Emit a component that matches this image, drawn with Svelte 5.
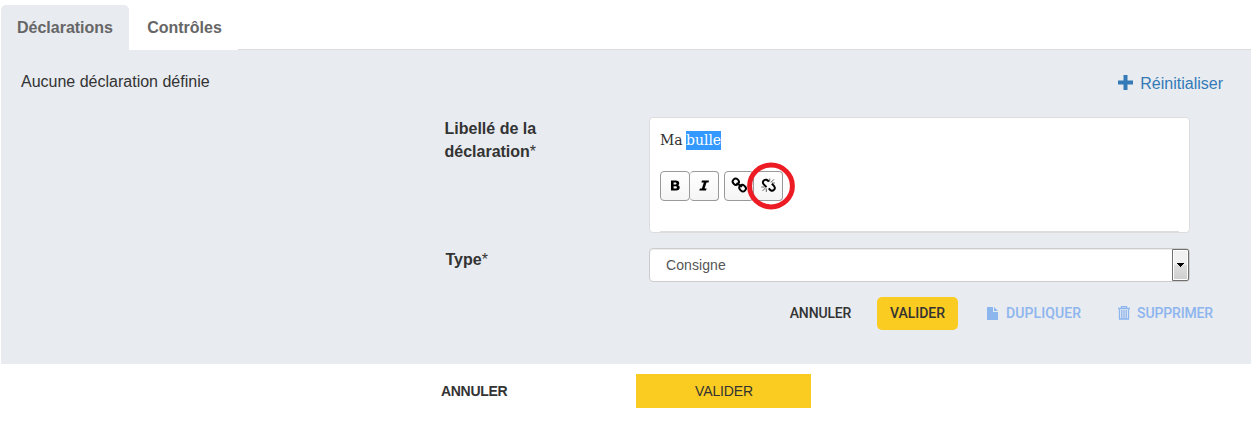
<script>
  const tabs = ['Déclarations', 'Contrôles'];
</script>

<main>
  <nav class="tabs">
    {#each tabs as tab, i}
      <button class="tab" class:active={i === 0}><span>{tab}</span></button>
    {/each}
    <div class="rule"></div>
  </nav>

  <section class="panel">
    <header class="top">
      <span class="empty">Aucune déclaration définie</span>
      <a class="reset" href="#reset">
        <svg width="15" height="15" viewBox="0 0 15 15"><path d="M5.500 0h4v5.500H15v4H9.500V15h-4V9.500H0v-4h5.500z" fill="#337ab7" /></svg>
        <span>Réinitialiser</span>
      </a>
    </header>

    <div class="field">
      <div class="label">
        <div>Libellé de la</div>
        <div class="line"><span>déclaration</span><span class="star">*</span></div>
      </div>
      <div class="editor">
        <div class="content">Ma <mark>bulle</mark></div>
        <div class="tools">
          <button class="tool" aria-label="Gras">
            <svg width="28" height="28" viewBox="0 0 28 28"><path fill-rule="evenodd" d="M10 8.500h4.700c2.300 0 3.500.9 3.500 2.700 0 1-.5 1.700-1.300 2 1.200.3 1.800 1.100 1.800 2.300 0 2-1.300 3-3.700 3h-5zM12.600 10.400v2h1.500c.9 0 1.400-.3 1.400-1s-.5-1-1.400-1zM12.600 14.200v2.400h1.700c1 0 1.600-.4 1.600-1.200s-.6-1.200-1.600-1.200z" /></svg>
          </button>
          <button class="tool second" aria-label="Italique">
            <svg width="28" height="28" viewBox="0 0 28 28"><path d="M12 8.500h7l-.5 2h-2l-1.900 6h2l-.6 2H9.300l.6-2h2l1.900-6h-2.400z" /></svg>
          </button>
          <button class="tool link" aria-label="Lien">
            <svg width="28" height="28" viewBox="0 0 28 28"><g fill="none" stroke="#000" stroke-width="1.900"><rect x="7.900" y="6.600" width="5.800" height="6.200" rx="2.800" transform="rotate(-45 10.800 9.700)" /><rect x="14.700" y="12.700" width="5.800" height="6.800" rx="2.800" transform="rotate(-45 17.600 16.100)" /><path d="M11.500 11l5.500 3.800" /></g></svg>
          </button>
          <button class="tool second" aria-label="Supprimer le lien">
            <svg width="28" height="28" viewBox="0 0 28 28"><g fill="none" stroke="#000"><path stroke-width="2" d="M14.800 9.800c-1.500-2.200-3.200-2.700-4.700-1.600-1.700 1.300-1.500 2.900-.3 4.200l2.700 2.700M17.900 11.700l2 2.100c1.300 1.500 1.300 3.100-.1 4.300-1.500 1.300-3.200.8-5-1.700" /><path stroke="#333" stroke-width=".75" d="M15.700 9.500V6.500M17 10.300l3-3M17.800 11h3M12.300 16.500v3.500M11.500 15.900l-3 3M10.500 15H7.300" /></g></svg>
          </button>
        </div>
        <svg class="callout" width="50" height="48" viewBox="0 0 50 48"><ellipse cx="24" cy="24" rx="21.400" ry="20.900" fill="none" stroke="#ed1c24" stroke-width="5" /></svg>
        <div class="baseline"></div>
      </div>
    </div>

    <div class="field type">
      <div class="label line"><span>Type</span><span class="star">*</span></div>
      <div class="select">
        <span>Consigne</span>
        <div class="arrow"><svg width="7" height="4" viewBox="0 0 7 4"><path d="M0 0h7v1H6v1H5v1H4v1H3V3H2V2H1V1H0z" /></svg></div>
      </div>
    </div>

    <div class="actions">
      <button class="cancel">ANNULER</button>
      <button class="valid">VALIDER</button>
      <button class="muted copy">
        <svg width="11" height="13" viewBox="0 0 11 13"><path d="M0 0h6v5h5v8H0zM7 0l4 4H7z" fill="#8db5ee" /></svg>
        <span>DUPLIQUER</span>
      </button>
      <button class="muted remove">
        <svg width="12" height="14" viewBox="0 0 12 14"><path d="M3.500 2V.5h5V2M0 2.500h12M1.500 3.500v9.500h9V3.500M3.800 4v8.500M6 4v8.500M8.200 4v8.500" fill="none" stroke="#8db5ee" stroke-width="1.300" /></svg>
        <span>SUPPRIMER</span>
      </button>
    </div>
  </section>

  <footer>
    <button class="footer-cancel">ANNULER</button>
    <button class="footer-valid">VALIDER</button>
  </footer>
</main>

<style>
  :global(body) { margin: 0; background: #fff; }
  * { box-sizing: border-box; }
  main { width: 1250px; height: 427px; margin-left: 1px; padding-top: 5px; font-family: "Liberation Sans", Arial, sans-serif; color: #333; overflow: hidden; }
  button { border: 0; margin: 0; padding: 0; background: none; font-family: inherit; color: inherit; white-space: nowrap; }
  svg { display: block; flex: none; }
  .tabs { display: flex; height: 45px; }
  .tab { width: 107px; height: 45px; font-size: 16px; font-weight: 700; color: #666; }
  .tab.active { width: 128px; margin-right: 2px; background: #e8ebf0; border-radius: 5px 5px 0 0; }
  .rule { flex: 1; border-bottom: 1px solid #ddd; }
  .panel { height: 314px; background: #e8ebf0; }
  .top { display: flex; justify-content: space-between; height: 67px; padding: 22px 28px 0 20px; font-size: 16px; line-height: 20px; }
  .reset { display: flex; gap: 7px; height: 20px; margin-top: 2px; color: #337ab7; text-decoration: none; }
  .reset svg { margin-top: 1px; }
  .field { display: flex; padding-left: 443.500px; }
  .label { width: 204.500px; font-weight: 700; font-size: 16px; line-height: 23px; }
  .line { display: flex; }
  .star { font-weight: 400; }
  .editor { position: relative; width: 541px; height: 116px; padding: 12px 10px; border: 1px solid #ddd; border-radius: 4px; background: #fff; }
  .content { height: 41px; font: 15.5px/20px "DejaVu Serif Condensed", "DejaVu Serif", serif; word-spacing: -1px; }
  mark { display: inline-block; height: 19px; line-height: 19px; background: #39f; color: #fff; }
  .tools { display: flex; }
  .tool { width: 30px; height: 30px; border: 1px solid #999; border-radius: 4px; background: linear-gradient(#fff, #f5f5f5); }
  .second { width: 29px; border-left: 0; }
  .link { margin-left: 5px; }
  .callout { position: absolute; left: 97px; top: 44px; }
  .baseline { position: absolute; left: 10px; right: 10px; bottom: 0; height: 1px; background: #ddd; }
  .type { margin-top: 15px; }
  .type .label { padding-left: 1px; }
  .select { display: flex; justify-content: space-between; width: 541px; height: 34px; padding-left: 16px; border: 1px solid #ccc; border-radius: 4px; background: #fff; box-shadow: inset 0 1px 1px #00000013; font-size: 14px; line-height: 32px; letter-spacing: .08px; color: #555; }
  .arrow { display: flex; align-items: center; justify-content: center; width: 17px; height: 32px; border: 1px solid #707070; box-shadow: inset 0 0 0 1px #fff; border-radius: 0 2px 2px 0; background: linear-gradient(#f1f1f1 0 48%, #dedede 50%, #cecece); }
  .actions { display: flex; align-items: center; height: 33px; margin: 15px 38px 0 788.500px; font-family: Roboto, sans-serif; }
  .actions button { padding-bottom: 1px; font-size: 14px; font-weight: 500; }
  .actions .cancel { width: 62px; letter-spacing: -.15px; }
  .valid { width: 81px; height: 33px; margin-left: 25.500px; border-radius: 5px; background: #facc22; }
  .muted { display: flex; align-items: center; color: #8db5ee; }
  .copy { margin-left: 29px; gap: 8px; }
  .copy span { letter-spacing: .1px; }
  .remove { margin-left: auto; gap: 7px; }
  .remove span { letter-spacing: -.15px; }
  footer { display: flex; padding: 10px 0 0 440px; }
  footer button { height: 34px; font-size: 14px; }
  .footer-cancel { width: 66px; font-weight: 700; letter-spacing: -.3px; }
  .footer-valid { width: 175px; margin-left: 129px; padding-left: 1px; background: #facc22; letter-spacing: -.15px; }
</style>
